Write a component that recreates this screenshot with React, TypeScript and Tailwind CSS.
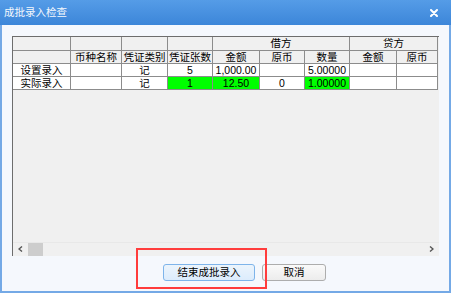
export default function App() {
  const cell = "border-r border-b border-[#8c8c8c] flex items-center justify-center leading-none whitespace-nowrap overflow-hidden";
  const head = `${cell} bg-[#f0f0f0]`;
  const data = `${cell} bg-white`;
  const green = `${cell} bg-[#00ff00]`;

  return (
    <div className="w-[451px] h-[293px] flex flex-col overflow-hidden bg-[#f5f8fd] font-['Liberation_Sans','Noto_Sans_CJK_SC',sans-serif] text-[10.5px] text-black">
      {/* title bar */}
      <div className="h-[25px] shrink-0 flex items-center justify-between pl-[4px] pr-[13px] bg-linear-to-b from-[#559ce7] to-[#3c86d9] text-[#f4f8fd] text-[10.5px]">
        <span>成批录入检查</span>
        <svg width="8" height="8" viewBox="0 0 8 8">
          <path d="M1 1 L7 7 M7 1 L1 7" stroke="white" strokeWidth="2" strokeLinecap="round" />
        </svg>
      </div>

      {/* body */}
      <div className="relative flex-1 flex flex-col border-x-2 border-b-2 border-[#74a9e6] pl-[10px] pt-[11px]">
        {/* grid box */}
        <div className="w-[427px] h-[220px] flex flex-col border-t border-l border-[#6d6d6d] bg-[#f0f0f0]">
          <div className="grid grid-cols-[58px_51px_46px_45px_47px_45px_45px_47px_41px] grid-rows-[14px_13px_13px_13px]">
            {/* header row 1 */}
            <div className={head}></div>
            <div className={head}></div>
            <div className={head}></div>
            <div className={head}></div>
            <div className={`${head} col-span-3`}>借方</div>
            <div className={`${head} col-span-2`}>贷方</div>
            {/* header row 2 */}
            <div className={head}></div>
            <div className={head}>币种名称</div>
            <div className={head}>凭证类别</div>
            <div className={head}>凭证张数</div>
            <div className={head}>金额</div>
            <div className={head}>原币</div>
            <div className={head}>数量</div>
            <div className={head}>金额</div>
            <div className={head}>原币</div>
            {/* data rows */}
            <div className={data}>设置录入</div>
            <div className={data}></div>
            <div className={data}>记</div>
            <div className={data}>5</div>
            <div className={data}>1,000.00</div>
            <div className={data}></div>
            <div className={data}>5.00000</div>
            <div className={data}></div>
            <div className={data}></div>

            <div className={data}>实际录入</div>
            <div className={data}></div>
            <div className={data}>记</div>
            <div className={green}>1</div>
            <div className={green}>12.50</div>
            <div className={data}>0</div>
            <div className={green}>1.00000</div>
            <div className={data}></div>
            <div className={data}></div>
          </div>

          <div className="flex-1"></div>

          {/* horizontal scrollbar */}
          <div className="h-[13px] mb-[1px] flex items-center border-t border-[#e8e8e8] bg-[#f0f0f0]">
            <div className="w-[15px] flex items-center justify-center">
              <svg width="5" height="6" viewBox="0 0 5 6">
                <path d="M4 0.5 L1 3 L4 5.5" fill="none" stroke="#555" strokeWidth="1.4" />
              </svg>
            </div>
            <div className="w-[15px] h-[13px] bg-[#cdcdcd]"></div>
            <div className="flex-1"></div>
            <div className="w-[15px] flex items-center justify-center">
              <svg width="5" height="6" viewBox="0 0 5 6">
                <path d="M1 0.5 L4 3 L1 5.5" fill="none" stroke="#555" strokeWidth="1.4" />
              </svg>
            </div>
          </div>
        </div>

        {/* buttons */}
        <div className="flex gap-[7px] mt-[8px] pl-[151px]">
          <button className="w-[92px] h-[17px] flex items-center justify-center rounded-[3px] border border-[#7eb4ea] bg-linear-to-b from-[#ecf4fc] to-[#dcecfc] leading-none">
            结束成批录入
          </button>
          <button className="w-[64px] h-[17px] flex items-center justify-center rounded-[3px] border border-[#adadad] bg-linear-to-b from-[#fafafa] to-[#ececec] leading-none">
            取消
          </button>
        </div>

        {/* red annotation box */}
        <div className="absolute left-[134px] top-[223px] w-[131px] h-[41px] border-2 border-[#ff3c3c] pointer-events-none"></div>
      </div>
    </div>
  );
}
